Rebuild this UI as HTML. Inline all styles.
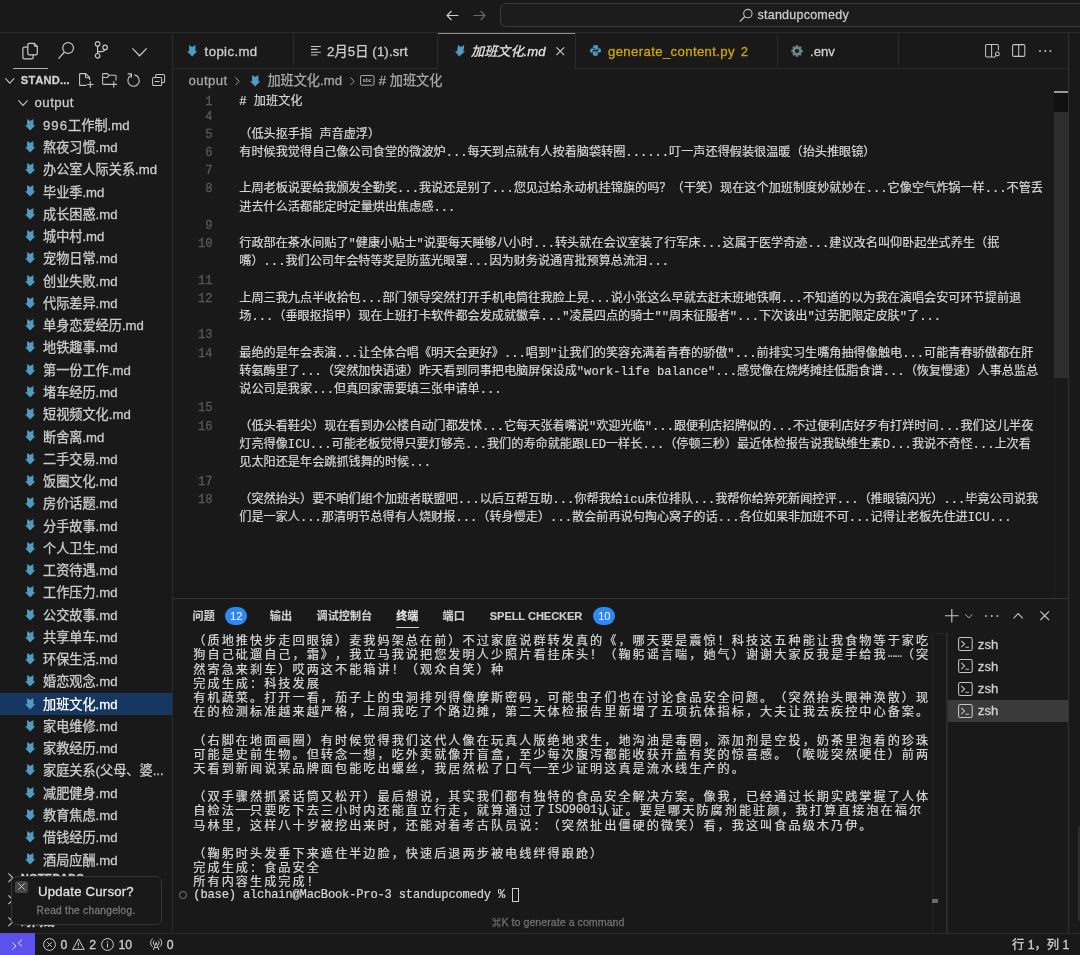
<!DOCTYPE html>
<html lang="zh-CN"><head><meta charset="utf-8"><title>standupcomedy</title>
<style>
*{box-sizing:border-box;margin:0;padding:0}
html,body{width:1080px;height:955px;overflow:hidden;background:#191919}
body{position:relative;text-spacing-trim:space-all;font-kerning:none;will-change:transform;font-family:"Liberation Sans","Noto Sans CJK SC","DejaVu Sans",sans-serif;font-size:13.16px;color:#cccccc;-webkit-text-stroke:0.28px currentColor}
.abs{position:absolute}
.ui{white-space:pre;position:absolute;line-height:22.28px;height:22.28px}
.mono{font-family:"Liberation Mono","Noto Sans CJK SC",monospace}
svg{position:absolute;overflow:visible}
.hl{position:absolute;background:#2b2b2b}
/* sidebar */
.row{position:absolute;left:0;width:172px;height:22.28px;line-height:22.28px;white-space:pre}
.row .t{position:absolute;left:43px;top:1px;color:#cccccc}
.row svg{left:25px;top:4.9px}
.sel{background:#163761}
.sel .t{color:#ffffff !important}
/* editor */
.ln{position:absolute;left:172px;width:40.6px;text-align:right;color:#5a5a5a;font-family:"Liberation Mono",monospace;font-size:12.15px;height:18.23px;line-height:18.23px}
.el{position:absolute;left:239.3px;color:#d6d6d6;-webkit-text-stroke:0.2px currentColor;font-family:"Liberation Mono","Noto Sans CJK SC",monospace;font-size:12.15px;height:18.23px;line-height:18.23px;white-space:pre}
/* terminal */
.tl{position:absolute;left:193.3px;color:#d8d8d8;-webkit-text-stroke:0.2px currentColor;font-family:"Liberation Mono","Noto Sans CJK SC",monospace;font-size:12.15px;height:14.18px;line-height:14.18px;white-space:pre;letter-spacing:2.03px}
.tl i{font-style:normal;letter-spacing:-0.2px;position:relative;top:-2.1px}
</style></head>
<body>
<div class="hl" style="left:0;top:32px;width:1080px;height:1px"></div>
<div class="abs" style="left:500px;top:3px;width:700px;height:24px;border:1px solid #3a3a3a;border-radius:6px;background:#1c1c1c"></div>
<div class="ui" style="left:757.5px;top:4.3px;font-size:12.5px;letter-spacing:0.24px;color:#cccccc">standupcomedy</div>
<svg style="left:738.6px;top:7.6px" width="14.4" height="14.4" viewBox="0 0 13 13"><circle cx="8" cy="5" r="3.8" fill="none" stroke="#bbb" stroke-width="1"/><path d="M5.3 7.7L0.8 12.2" stroke="#bbb" stroke-width="1.1" fill="none"/></svg>
<svg style="left:446px;top:10px" width="13" height="11" viewBox="0 0 13 11"><path d="M12.5 5.5H1M5.5 1L1 5.5L5.5 10" stroke="#cfcfcf" stroke-width="1.1" fill="none"/></svg>
<svg style="left:473px;top:10px" width="13" height="11" viewBox="0 0 13 11"><path d="M0.5 5.5H12M7.5 1L12 5.5L7.5 10" stroke="#6a6a6a" stroke-width="1.1" fill="none"/></svg>
<div class="hl" style="left:171.5px;top:33px;width:1px;height:900px"></div>
<div class="hl" style="left:1068px;top:33px;width:1px;height:900px;background:#333"></div>
<div class="abs" style="left:1078.4px;top:826px;width:1.6px;height:95px;background:#2c2c2c"></div>
<svg style="left:22px;top:41.5px" width="16" height="18" viewBox="0 0 16 18"><path d="M7.2 1.3H12.2L15.3 4.4V11.4Q15.3 12.8 13.9 12.8H7.2Q5.8 12.8 5.8 11.4V2.7Q5.8 1.3 7.2 1.3Z" stroke="#c9c9c9" stroke-width="1.2" fill="none"/><path d="M12.2 1.3V3.4Q12.2 4.4 13.2 4.4H15.3Z" stroke="#c9c9c9" stroke-width="1" fill="#8a8a8a"/><path d="M5.8 5.1H2.3Q0.9 5.1 0.9 6.5V15.5Q0.9 16.9 2.3 16.9H9.7Q11.1 16.9 11.1 15.5V12.8" stroke="#c9c9c9" stroke-width="1.2" fill="none"/></svg>
<div class="abs" style="left:12.6px;top:67.5px;width:35.3px;height:1.5px;background:#b0b0b0"></div>
<svg style="left:58px;top:42px" width="16.5" height="17.5" viewBox="0 0 16.5 17.5"><circle cx="10.1" cy="6" r="5.4" fill="none" stroke="#c5c5c5" stroke-width="1.2"/><path d="M6.3 10.2L0.5 16.6" stroke="#c5c5c5" stroke-width="1.3" fill="none"/></svg>
<svg style="left:94px;top:41.2px" width="15" height="18" viewBox="0 0 15 18"><circle cx="3.6" cy="2.9" r="2.3" fill="none" stroke="#c5c5c5" stroke-width="1.2"/><circle cx="3.6" cy="14.8" r="2.3" fill="none" stroke="#c5c5c5" stroke-width="1.2"/><circle cx="11.1" cy="6.4" r="2.3" fill="none" stroke="#c5c5c5" stroke-width="1.2"/><path d="M3.6 5.2V12.5M3.6 10.7H7.4Q10.4 10.7 10.9 8.7" stroke="#c5c5c5" stroke-width="1.2" fill="none"/></svg>
<svg style="left:131.6px;top:47.8px" width="15.1" height="8.2" viewBox="0 0 15.1 8.2"><path d="M0.4 0.4L7.55 7.799999999999999L14.7 0.4" stroke="#c5c5c5" stroke-width="1.3" fill="none"/></svg>
<svg style="left:5.4px;top:77.6px" width="9.6" height="5.6" viewBox="0 0 9.6 5.6"><path d="M0.4 0.4L4.8 5.199999999999999L9.2 0.4" stroke="#c5c5c5" stroke-width="1.1" fill="none"/></svg>
<div class="ui" style="left:20.8px;top:69px;font-size:11.1px;font-weight:700;color:#d0d0d0;letter-spacing:0.2px">STAND...</div>
<svg style="left:78.8px;top:73px" width="15" height="15.4" viewBox="0 0 15 15.4"><path d="M7.4 12.4H1.2Q0.6 12.4 0.6 11.8V1.2Q0.6 0.6 1.2 0.6H6.6L10.6 4.6V7M6.5 0.7V4.1Q6.5 4.7 7.1 4.7H10.5" stroke="#c5c5c5" stroke-width="1.1" fill="none"/><path d="M11.3 8.2V14.8M8 11.5H14.6" stroke="#c5c5c5" stroke-width="1.15" fill="none"/></svg>
<svg style="left:102px;top:73.3px" width="15.6" height="15" viewBox="0 0 15.6 15"><path d="M8.4 11.4H1.5Q0.6 11.4 0.6 10.5V1.5Q0.6 0.6 1.5 0.6H5.2L6.8 2.2H13.1Q14 2.2 14 3.1V7.4M0.8 4.4H5.4L6.9 2.9" stroke="#c5c5c5" stroke-width="1.05" fill="none"/><path d="M11.8 8.2V14.6M8.6 11.4H15" stroke="#c5c5c5" stroke-width="1.05" fill="none"/></svg>
<svg style="left:127px;top:73.3px" width="13.4" height="14" viewBox="0 0 13.4 14"><path d="M4.3 2.3A5.7 5.7 0 1 0 7.4 1.9" stroke="#c5c5c5" stroke-width="1.1" fill="none"/><path d="M0.6 0.9H4.4V4.7" stroke="#c5c5c5" stroke-width="1.1" fill="none"/></svg>
<svg style="left:151.7px;top:74.2px" width="13.2" height="12.2" viewBox="0 0 13.2 12.2"><path d="M3.6 3.4V1.7Q3.6 0.6 4.7 0.6H11.5Q12.6 0.6 12.6 1.7V7.4Q12.6 8.5 11.5 8.5H9.8" stroke="#c5c5c5" stroke-width="1.05" fill="none"/><rect x="0.6" y="3.5" width="9.1" height="8.1" rx="1.1" stroke="#c5c5c5" stroke-width="1.05" fill="none"/><path d="M2.7 7.55H7.6" stroke="#c5c5c5" stroke-width="1.05" fill="none"/></svg>
<svg style="left:18.2px;top:100.4px" width="10" height="5.8" viewBox="0 0 10 5.8"><path d="M0.4 0.4L5.0 5.3999999999999995L9.6 0.4" stroke="#c5c5c5" stroke-width="1.1" fill="none"/></svg>
<div class="ui" style="left:34.6px;top:91.9px;color:#cccccc;letter-spacing:0.45px">output</div>
<div class="row" style="top:113.80px"><svg width="10.3" height="11.5" viewBox="0 0 10.3 11.5"><path d="M2.1 0L5.15 2L8.4 0V6.2H10.3L5.15 11.5L0 6.2H2.1Z" fill="#4f9bc2"/></svg><span class="t"><span style="letter-spacing:1.05px">996</span>工作制.md</span></div>
<div class="row" style="top:136.06px"><svg width="10.3" height="11.5" viewBox="0 0 10.3 11.5"><path d="M2.1 0L5.15 2L8.4 0V6.2H10.3L5.15 11.5L0 6.2H2.1Z" fill="#4f9bc2"/></svg><span class="t">熬夜习惯.md</span></div>
<div class="row" style="top:158.33px"><svg width="10.3" height="11.5" viewBox="0 0 10.3 11.5"><path d="M2.1 0L5.15 2L8.4 0V6.2H10.3L5.15 11.5L0 6.2H2.1Z" fill="#4f9bc2"/></svg><span class="t">办公室人际关系.md</span></div>
<div class="row" style="top:180.59px"><svg width="10.3" height="11.5" viewBox="0 0 10.3 11.5"><path d="M2.1 0L5.15 2L8.4 0V6.2H10.3L5.15 11.5L0 6.2H2.1Z" fill="#4f9bc2"/></svg><span class="t">毕业季.md</span></div>
<div class="row" style="top:202.86px"><svg width="10.3" height="11.5" viewBox="0 0 10.3 11.5"><path d="M2.1 0L5.15 2L8.4 0V6.2H10.3L5.15 11.5L0 6.2H2.1Z" fill="#4f9bc2"/></svg><span class="t">成长困惑.md</span></div>
<div class="row" style="top:225.12px"><svg width="10.3" height="11.5" viewBox="0 0 10.3 11.5"><path d="M2.1 0L5.15 2L8.4 0V6.2H10.3L5.15 11.5L0 6.2H2.1Z" fill="#4f9bc2"/></svg><span class="t">城中村.md</span></div>
<div class="row" style="top:247.39px"><svg width="10.3" height="11.5" viewBox="0 0 10.3 11.5"><path d="M2.1 0L5.15 2L8.4 0V6.2H10.3L5.15 11.5L0 6.2H2.1Z" fill="#4f9bc2"/></svg><span class="t">宠物日常.md</span></div>
<div class="row" style="top:269.66px"><svg width="10.3" height="11.5" viewBox="0 0 10.3 11.5"><path d="M2.1 0L5.15 2L8.4 0V6.2H10.3L5.15 11.5L0 6.2H2.1Z" fill="#4f9bc2"/></svg><span class="t">创业失败.md</span></div>
<div class="row" style="top:291.92px"><svg width="10.3" height="11.5" viewBox="0 0 10.3 11.5"><path d="M2.1 0L5.15 2L8.4 0V6.2H10.3L5.15 11.5L0 6.2H2.1Z" fill="#4f9bc2"/></svg><span class="t">代际差异.md</span></div>
<div class="row" style="top:314.19px"><svg width="10.3" height="11.5" viewBox="0 0 10.3 11.5"><path d="M2.1 0L5.15 2L8.4 0V6.2H10.3L5.15 11.5L0 6.2H2.1Z" fill="#4f9bc2"/></svg><span class="t">单身恋爱经历.md</span></div>
<div class="row" style="top:336.45px"><svg width="10.3" height="11.5" viewBox="0 0 10.3 11.5"><path d="M2.1 0L5.15 2L8.4 0V6.2H10.3L5.15 11.5L0 6.2H2.1Z" fill="#4f9bc2"/></svg><span class="t">地铁趣事.md</span></div>
<div class="row" style="top:358.72px"><svg width="10.3" height="11.5" viewBox="0 0 10.3 11.5"><path d="M2.1 0L5.15 2L8.4 0V6.2H10.3L5.15 11.5L0 6.2H2.1Z" fill="#4f9bc2"/></svg><span class="t">第一份工作.md</span></div>
<div class="row" style="top:380.98px"><svg width="10.3" height="11.5" viewBox="0 0 10.3 11.5"><path d="M2.1 0L5.15 2L8.4 0V6.2H10.3L5.15 11.5L0 6.2H2.1Z" fill="#4f9bc2"/></svg><span class="t">堵车经历.md</span></div>
<div class="row" style="top:403.25px"><svg width="10.3" height="11.5" viewBox="0 0 10.3 11.5"><path d="M2.1 0L5.15 2L8.4 0V6.2H10.3L5.15 11.5L0 6.2H2.1Z" fill="#4f9bc2"/></svg><span class="t">短视频文化.md</span></div>
<div class="row" style="top:425.51px"><svg width="10.3" height="11.5" viewBox="0 0 10.3 11.5"><path d="M2.1 0L5.15 2L8.4 0V6.2H10.3L5.15 11.5L0 6.2H2.1Z" fill="#4f9bc2"/></svg><span class="t">断舍离.md</span></div>
<div class="row" style="top:447.78px"><svg width="10.3" height="11.5" viewBox="0 0 10.3 11.5"><path d="M2.1 0L5.15 2L8.4 0V6.2H10.3L5.15 11.5L0 6.2H2.1Z" fill="#4f9bc2"/></svg><span class="t">二手交易.md</span></div>
<div class="row" style="top:470.04px"><svg width="10.3" height="11.5" viewBox="0 0 10.3 11.5"><path d="M2.1 0L5.15 2L8.4 0V6.2H10.3L5.15 11.5L0 6.2H2.1Z" fill="#4f9bc2"/></svg><span class="t">饭圈文化.md</span></div>
<div class="row" style="top:492.31px"><svg width="10.3" height="11.5" viewBox="0 0 10.3 11.5"><path d="M2.1 0L5.15 2L8.4 0V6.2H10.3L5.15 11.5L0 6.2H2.1Z" fill="#4f9bc2"/></svg><span class="t">房价话题.md</span></div>
<div class="row" style="top:514.57px"><svg width="10.3" height="11.5" viewBox="0 0 10.3 11.5"><path d="M2.1 0L5.15 2L8.4 0V6.2H10.3L5.15 11.5L0 6.2H2.1Z" fill="#4f9bc2"/></svg><span class="t">分手故事.md</span></div>
<div class="row" style="top:536.84px"><svg width="10.3" height="11.5" viewBox="0 0 10.3 11.5"><path d="M2.1 0L5.15 2L8.4 0V6.2H10.3L5.15 11.5L0 6.2H2.1Z" fill="#4f9bc2"/></svg><span class="t">个人卫生.md</span></div>
<div class="row" style="top:559.10px"><svg width="10.3" height="11.5" viewBox="0 0 10.3 11.5"><path d="M2.1 0L5.15 2L8.4 0V6.2H10.3L5.15 11.5L0 6.2H2.1Z" fill="#4f9bc2"/></svg><span class="t">工资待遇.md</span></div>
<div class="row" style="top:581.37px"><svg width="10.3" height="11.5" viewBox="0 0 10.3 11.5"><path d="M2.1 0L5.15 2L8.4 0V6.2H10.3L5.15 11.5L0 6.2H2.1Z" fill="#4f9bc2"/></svg><span class="t">工作压力.md</span></div>
<div class="row" style="top:603.63px"><svg width="10.3" height="11.5" viewBox="0 0 10.3 11.5"><path d="M2.1 0L5.15 2L8.4 0V6.2H10.3L5.15 11.5L0 6.2H2.1Z" fill="#4f9bc2"/></svg><span class="t">公交故事.md</span></div>
<div class="row" style="top:625.89px"><svg width="10.3" height="11.5" viewBox="0 0 10.3 11.5"><path d="M2.1 0L5.15 2L8.4 0V6.2H10.3L5.15 11.5L0 6.2H2.1Z" fill="#4f9bc2"/></svg><span class="t">共享单车.md</span></div>
<div class="row" style="top:648.16px"><svg width="10.3" height="11.5" viewBox="0 0 10.3 11.5"><path d="M2.1 0L5.15 2L8.4 0V6.2H10.3L5.15 11.5L0 6.2H2.1Z" fill="#4f9bc2"/></svg><span class="t">环保生活.md</span></div>
<div class="row" style="top:670.42px"><svg width="10.3" height="11.5" viewBox="0 0 10.3 11.5"><path d="M2.1 0L5.15 2L8.4 0V6.2H10.3L5.15 11.5L0 6.2H2.1Z" fill="#4f9bc2"/></svg><span class="t">婚恋观念.md</span></div>
<div class="row sel" style="top:692.69px"><svg width="10.3" height="11.5" viewBox="0 0 10.3 11.5"><path d="M2.1 0L5.15 2L8.4 0V6.2H10.3L5.15 11.5L0 6.2H2.1Z" fill="#4f9bc2"/></svg><span class="t">加班文化.md</span></div>
<div class="row" style="top:714.95px"><svg width="10.3" height="11.5" viewBox="0 0 10.3 11.5"><path d="M2.1 0L5.15 2L8.4 0V6.2H10.3L5.15 11.5L0 6.2H2.1Z" fill="#4f9bc2"/></svg><span class="t">家电维修.md</span></div>
<div class="row" style="top:737.22px"><svg width="10.3" height="11.5" viewBox="0 0 10.3 11.5"><path d="M2.1 0L5.15 2L8.4 0V6.2H10.3L5.15 11.5L0 6.2H2.1Z" fill="#4f9bc2"/></svg><span class="t">家教经历.md</span></div>
<div class="row" style="top:759.49px"><svg width="10.3" height="11.5" viewBox="0 0 10.3 11.5"><path d="M2.1 0L5.15 2L8.4 0V6.2H10.3L5.15 11.5L0 6.2H2.1Z" fill="#4f9bc2"/></svg><span class="t">家庭关系(父母、婆...</span></div>
<div class="row" style="top:781.75px"><svg width="10.3" height="11.5" viewBox="0 0 10.3 11.5"><path d="M2.1 0L5.15 2L8.4 0V6.2H10.3L5.15 11.5L0 6.2H2.1Z" fill="#4f9bc2"/></svg><span class="t">减肥健身.md</span></div>
<div class="row" style="top:804.01px"><svg width="10.3" height="11.5" viewBox="0 0 10.3 11.5"><path d="M2.1 0L5.15 2L8.4 0V6.2H10.3L5.15 11.5L0 6.2H2.1Z" fill="#4f9bc2"/></svg><span class="t">教育焦虑.md</span></div>
<div class="row" style="top:826.28px"><svg width="10.3" height="11.5" viewBox="0 0 10.3 11.5"><path d="M2.1 0L5.15 2L8.4 0V6.2H10.3L5.15 11.5L0 6.2H2.1Z" fill="#4f9bc2"/></svg><span class="t">借钱经历.md</span></div>
<div class="row" style="top:848.54px"><svg width="10.3" height="11.5" viewBox="0 0 10.3 11.5"><path d="M2.1 0L5.15 2L8.4 0V6.2H10.3L5.15 11.5L0 6.2H2.1Z" fill="#4f9bc2"/></svg><span class="t">酒局应酬.md</span></div>
<svg style="left:7.6px;top:872.9000000000001px" width="5.2" height="9.6" viewBox="0 0 5.2 9.6"><path d="M0.4 0.4L4.8 4.8L0.4 9.2" stroke="#c5c5c5" stroke-width="1.1" fill="none"/></svg>
<div class="ui" style="left:20.8px;top:866.70px;font-size:11.1px;font-weight:700;color:#d0d0d0;letter-spacing:0.2px">NOTEPADS</div>
<svg style="left:7.6px;top:895.1800000000001px" width="5.2" height="9.6" viewBox="0 0 5.2 9.6"><path d="M0.4 0.4L4.8 4.8L0.4 9.2" stroke="#c5c5c5" stroke-width="1.1" fill="none"/></svg>
<div class="ui" style="left:20.8px;top:888.98px;font-size:11.1px;font-weight:700;color:#d0d0d0;letter-spacing:0.2px">大纲</div>
<svg style="left:7.6px;top:917.46px" width="5.2" height="9.6" viewBox="0 0 5.2 9.6"><path d="M0.4 0.4L4.8 4.8L0.4 9.2" stroke="#c5c5c5" stroke-width="1.1" fill="none"/></svg>
<div class="ui" style="left:20.8px;top:911.26px;font-size:11.1px;font-weight:700;color:#d0d0d0;letter-spacing:0.2px">时间线</div>
<div class="abs" style="left:10.8px;top:875.8px;width:151.2px;height:48.8px;background:#191919;border:1px solid #363636;border-radius:6px"></div>
<div class="abs" style="left:14.8px;top:880.5px;width:13px;height:12.7px;background:#464646;border-radius:2.5px"></div>
<svg style="left:17.8px;top:883.3px" width="7" height="7" viewBox="0 0 7 7"><path d="M0.3 0.3L6.7 6.7M6.7 0.3L0.3 6.7" stroke="#d0d0d0" stroke-width="0.9" fill="none"/></svg>
<div class="ui" style="left:38px;top:881.2px;font-size:13.2px;letter-spacing:0.2px;color:#e2e2e2">Update Cursor?</div>
<div class="ui" style="left:36.6px;top:899.6px;font-size:10.2px;letter-spacing:0.26px;color:#7a7a7a">Read the changelog.</div>
<div class="hl" style="left:172px;top:67.5px;width:896px;height:1px"></div>
<div class="hl" style="left:293px;top:33px;width:1px;height:35px"></div>
<div class="hl" style="left:437px;top:33px;width:1px;height:35px"></div>
<div class="hl" style="left:575px;top:33px;width:1px;height:35px"></div>
<div class="hl" style="left:776.5px;top:33px;width:1px;height:35px"></div>
<div class="hl" style="left:898px;top:33px;width:1px;height:35px"></div>
<div class="abs" style="left:437.5px;top:33px;width:137.5px;height:35.5px;background:#191919"></div>
<div class="abs" style="left:437.5px;top:32.5px;width:137.5px;height:1.9px;background:#8c8c8c"></div>
<svg style="left:187px;top:45.1px" width="10.3" height="11.5" viewBox="0 0 10.3 11.5"><path d="M2.1 0L5.15 2L8.4 0V6.2H10.3L5.15 11.5L0 6.2H2.1Z" fill="#4f9bc2"/></svg>
<div class="ui" style="left:204.6px;top:41px;color:#d0d0d0;letter-spacing:0.41px">topic.md</div>
<svg style="left:311px;top:46.3px" width="10" height="9.6" viewBox="0 0 10 9.6"><path d="M0 0.6H9.8M0 3.4H6.6M0 6.2H9.8M0 9H6.6" stroke="#c5c5c5" stroke-width="1.05" fill="none"/></svg>
<div class="ui" style="left:327px;top:41px;color:#d0d0d0;letter-spacing:0.15px">2月5日 (1).srt</div>
<svg style="left:455px;top:45.1px;transform:skewX(-10deg)" width="10.3" height="11.5" viewBox="0 0 10.3 11.5"><path d="M2.1 0L5.15 2L8.4 0V6.2H10.3L5.15 11.5L0 6.2H2.1Z" fill="#4f9bc2"/></svg>
<div class="ui" style="left:471px;top:41px;color:#e4e4e4;font-style:italic">加班文化.md</div>
<svg style="left:556.4px;top:46.6px" width="8.6" height="8.6" viewBox="0 0 8.6 8.6"><path d="M0.4 0.4L8.2 8.2M8.2 0.4L0.4 8.2" stroke="#d0d0d0" stroke-width="1.05" fill="none"/></svg>
<svg style="left:590.2px;top:45.4px" width="11" height="11" viewBox="0 0 11.4 11.4"><path d="M5.6 0C3 0 3 1.1 3 1.7V3H5.8V3.5H1.7C0.5 3.5 0 4.5 0 5.7C0 6.9 0.5 8 1.7 8H2.7V6.6C2.7 5.6 3.5 4.9 4.4 4.9H7.1C7.9 4.9 8.4 4.3 8.4 3.6V1.7C8.4 0.6 7.4 0 5.6 0ZM4.1 0.9A0.5 0.5 0 1 1 4.1 1.9A0.5 0.5 0 1 1 4.1 0.9Z" fill="#4f9bc0"/><path d="M5.8 11.4C8.4 11.4 8.4 10.3 8.4 9.7V8.4H5.6V7.9H9.7C10.9 7.9 11.4 6.9 11.4 5.7C11.4 4.5 10.9 3.4 9.7 3.4H8.7V4.8C8.7 5.8 7.9 6.5 7 6.5H4.3C3.5 6.5 3 7.1 3 7.8V9.7C3 10.8 4 11.4 5.8 11.4ZM7.3 10.5A0.5 0.5 0 1 1 7.3 9.5A0.5 0.5 0 1 1 7.3 10.5Z" fill="#4f9bc0"/></svg>
<div class="ui" style="left:608px;top:41px;color:#d0a800;letter-spacing:0.37px">generate_content.py</div>
<div class="ui" style="left:741px;top:41px;color:#d0a800;font-size:12.4px">2</div>
<svg style="left:791px;top:45px" width="12" height="12" viewBox="0 0 12 12"><g fill="none" stroke="#6f858c"><circle cx="6" cy="6" r="3.3" stroke-width="2.5"/><path d="M6 0.3V2M6 10V11.7M0.3 6H2M10 6H11.7M2 2L3.2 3.2M8.8 8.8L10 10M2 10L3.2 8.8M8.8 3.2L10 2" stroke-width="2.5"/></g></svg>
<div class="ui" style="left:810px;top:41px;color:#d0d0d0">.env</div>
<svg style="left:985px;top:44px" width="15.4" height="14.4" viewBox="0 0 15.4 14.4"><path d="M8.4 13H1.9Q0.6 13 0.6 11.7V1.9Q0.6 0.6 1.9 0.6H12.1Q13.4 0.6 13.4 1.9V6.2M6.6 0.8V12.8" stroke="#c5c5c5" stroke-width="1.05" fill="none"/><circle cx="12.4" cy="10" r="1.9" stroke="#c5c5c5" stroke-width="1.05" fill="none"/><path d="M11 11.5L8.8 13.8" stroke="#c5c5c5" stroke-width="1.05" fill="none"/></svg>
<svg style="left:1012px;top:44.4px" width="13.4" height="13" viewBox="0 0 13.4 13"><rect x="0.6" y="0.6" width="12.2" height="11.8" rx="1.4" stroke="#c5c5c5" stroke-width="1.05" fill="none"/><path d="M6.7 0.8V12.2" stroke="#c5c5c5" stroke-width="1.05" fill="none"/></svg>
<svg style="left:1039px;top:50.3px" width="12.4" height="2" viewBox="0 0 12.4 2"><circle cx="1" cy="1" r="0.95" fill="#c5c5c5"/><circle cx="6.2" cy="1" r="0.95" fill="#c5c5c5"/><circle cx="11.4" cy="1" r="0.95" fill="#c5c5c5"/></svg>
<div class="ui" style="left:188.6px;top:69.6px;color:#a8a8a8;letter-spacing:0.4px">output</div>
<svg style="left:235.2px;top:76.6px" width="4.6" height="8.6" viewBox="0 0 4.6 8.6"><path d="M0.4 0.4L4.199999999999999 4.3L0.4 8.2" stroke="#9a9a9a" stroke-width="1" fill="none"/></svg>
<svg style="left:250px;top:74.8px" width="10.3" height="11.5" viewBox="0 0 10.3 11.5"><path d="M2.1 0L5.15 2L8.4 0V6.2H10.3L5.15 11.5L0 6.2H2.1Z" fill="#4f9bc2"/></svg>
<div class="ui" style="left:267.4px;top:69.6px;color:#a8a8a8">加班文化.md</div>
<svg style="left:349.8px;top:76.6px" width="4.6" height="8.6" viewBox="0 0 4.6 8.6"><path d="M0.4 0.4L4.199999999999999 4.3L0.4 8.2" stroke="#9a9a9a" stroke-width="1" fill="none"/></svg>
<svg style="left:360.4px;top:75.4px" width="14.6" height="10.8" viewBox="0 0 14.6 10.8"><rect x="0.55" y="0.55" width="13.5" height="9.7" rx="1.3" stroke="#a8a8a8" stroke-width="1" fill="none"/><text x="7.3" y="7.1" font-family="Liberation Sans, sans-serif" font-size="5.2" font-weight="700" fill="#a8a8a8" text-anchor="middle">abc</text></svg>
<div class="ui" style="left:378.8px;top:69.6px;color:#a8a8a8"># 加班文化</div>
<div class="ln" style="top:93.3px">1</div>
<div class="el" style="top:93.3px"># 加班文化</div>
<div class="ln" style="top:108.00px">4</div>
<div class="ln" style="top:125.50px">5</div>
<div class="el" style="top:125.50px">（低头抠手指 声音虚浮）</div>
<div class="ln" style="top:143.76px">6</div>
<div class="el" style="top:143.76px">有时候我觉得自己像公司食堂的微波炉...每天到点就有人按着脑袋转圈......叮一声还得假装很温暖（抬头推眼镜）</div>
<div class="ln" style="top:162.03px">7</div>
<div class="ln" style="top:180.30px">8</div>
<div class="el" style="top:180.30px">上周老板说要给我颁发全勤奖...我说还是别了...您见过给永动机挂锦旗的吗？（干笑）现在这个加班制度妙就妙在...它像空气炸锅一样...不管丢</div>
<div class="el" style="top:198.56px">进去什么活都能定时定量烘出焦虑感...</div>
<div class="ln" style="top:216.82px">9</div>
<div class="ln" style="top:235.09px">10</div>
<div class="el" style="top:235.09px">行政部在茶水间贴了"健康小贴士"说要每天睡够八小时...转头就在会议室装了行军床...这属于医学奇迹...建议改名叫仰卧起坐式养生（抿</div>
<div class="el" style="top:253.36px">嘴）...我们公司年会特等奖是防蓝光眼罩...因为财务说通宵批预算总流泪...</div>
<div class="ln" style="top:271.62px">11</div>
<div class="ln" style="top:289.88px">12</div>
<div class="el" style="top:289.88px">上周三我九点半收拾包...部门领导突然打开手机电筒往我脸上晃...说小张这么早就去赶末班地铁啊...不知道的以为我在演唱会安可环节提前退</div>
<div class="el" style="top:308.15px">场...（垂眼抠指甲）现在上班打卡软件都会发成就徽章..."凌晨四点的骑士""周末征服者"...下次该出"过劳肥限定皮肤"了...</div>
<div class="ln" style="top:326.42px">13</div>
<div class="ln" style="top:344.68px">14</div>
<div class="el" style="top:344.68px">最绝的是年会表演...让全体合唱《明天会更好》...唱到"让我们的笑容充满着青春的骄傲"...前排实习生嘴角抽得像触电...可能青春骄傲都在肝</div>
<div class="el" style="top:362.94px">转氨酶里了...（突然加快语速）昨天看到同事把电脑屏保设成"work-life balance"...感觉像在烧烤摊挂低脂食谱...（恢复慢速）人事总监总</div>
<div class="el" style="top:381.21px">说公司是我家...但真回家需要填三张申请单...</div>
<div class="ln" style="top:399.48px">15</div>
<div class="ln" style="top:417.74px">16</div>
<div class="el" style="top:417.74px">（低头看鞋尖）现在看到办公楼自动门都发怵...它每天张着嘴说"欢迎光临"...跟便利店招牌似的...不过便利店好歹有打烊时间...我们这儿半夜</div>
<div class="el" style="top:436.00px">灯亮得像ICU...可能老板觉得只要灯够亮...我们的寿命就能跟LED一样长...（停顿三秒）最近体检报告说我缺维生素D...我说不奇怪...上次看</div>
<div class="el" style="top:454.27px">见太阳还是年会跳抓钱舞的时候...</div>
<div class="ln" style="top:472.54px">17</div>
<div class="ln" style="top:490.80px">18</div>
<div class="el" style="top:490.80px">（突然抬头）要不咱们组个加班者联盟吧...以后互帮互助...你帮我给icu床位排队...我帮你给猝死新闻控评...（推眼镜闪光）...毕竟公司说我</div>
<div class="el" style="top:509.06px">们是一家人...那清明节总得有人烧财报...（转身慢走）...散会前再说句掏心窝子的话...各位如果非加班不可...记得让老板先住进ICU...</div>
<div class="abs" style="left:1054px;top:92px;width:1px;height:505px;background:#202020"></div>
<div class="abs" style="left:1054px;top:91.4px;width:14px;height:1.8px;background:#9a9a9a"></div>
<div class="abs" style="left:1054px;top:93.2px;width:14px;height:19px;background:#111111"></div>
<div class="abs" style="left:1054px;top:112px;width:14px;height:266px;background:#2e2e2e"></div>
<div class="hl" style="left:172px;top:597.5px;width:896px;height:1px;background:#333"></div>
<div class="ui" style="left:192.6px;top:604.8px;font-size:11.1px;font-weight:700;-webkit-text-stroke:0.1px;color:#cfcfcf">问题</div>
<div class="ui" style="left:269.8px;top:604.8px;font-size:11.1px;font-weight:700;-webkit-text-stroke:0.1px;color:#cfcfcf">输出</div>
<div class="ui" style="left:316.6px;top:604.8px;font-size:11.1px;font-weight:700;-webkit-text-stroke:0.1px;color:#cfcfcf">调试控制台</div>
<div class="ui" style="left:396.2px;top:604.8px;font-size:11.1px;font-weight:700;-webkit-text-stroke:0.1px;color:#e6e6e6">终端</div>
<div class="ui" style="left:442.6px;top:604.8px;font-size:11.1px;font-weight:700;-webkit-text-stroke:0.1px;color:#cfcfcf">端口</div>
<div class="ui" style="left:489.8px;top:604.8px;font-size:11.1px;font-weight:700;-webkit-text-stroke:0.1px;color:#cfcfcf;letter-spacing:-0.1px">SPELL CHECKER</div>
<div class="abs" style="left:396px;top:626.6px;width:23px;height:1.2px;background:#d0d0d0"></div>
<div class="abs" style="left:225px;top:606.8px;width:22.3px;height:18px;border-radius:9px;background:#2b8af7"></div>
<div class="ui" style="left:225px;top:604.8px;width:22.3px;text-align:center;font-size:11.1px;-webkit-text-stroke:0;color:#ffffff">12</div>
<div class="abs" style="left:593.2px;top:606.8px;width:22.3px;height:18px;border-radius:9px;background:#2b8af7"></div>
<div class="ui" style="left:593.2px;top:604.8px;width:22.3px;text-align:center;font-size:11.1px;-webkit-text-stroke:0;color:#ffffff">10</div>
<svg style="left:945.2px;top:609px" width="13.6" height="13.6" viewBox="0 0 13.6 13.6"><path d="M6.8 0V13.6M0 6.8H13.6" stroke="#c5c5c5" stroke-width="1.15" fill="none"/></svg>
<svg style="left:964.8px;top:614.4px" width="7.6" height="4.4" viewBox="0 0 7.6 4.4"><path d="M0.4 0.4L3.8 4.0L7.199999999999999 0.4" stroke="#b0b0b0" stroke-width="1" fill="none"/></svg>
<svg style="left:985px;top:615.2px" width="13.4" height="2" viewBox="0 0 13.4 2"><circle cx="1" cy="1" r="0.95" fill="#c5c5c5"/><circle cx="6.7" cy="1" r="0.95" fill="#c5c5c5"/><circle cx="12.4" cy="1" r="0.95" fill="#c5c5c5"/></svg>
<svg style="left:1013.2px;top:612.6px" width="10.2" height="5.8" viewBox="0 0 10.2 5.8"><path d="M0.4 5.4L5.1 0.6L9.8 5.4" stroke="#c5c5c5" stroke-width="1.1" fill="none"/></svg>
<svg style="left:1039.8px;top:611.4px" width="9.4" height="9.4" viewBox="0 0 9.4 9.4"><path d="M0.4 0.4L9 9M9 0.4L0.4 9" stroke="#c5c5c5" stroke-width="1.1" fill="none"/></svg>
<div class="tl" style="top:635.30px">（质地推快步走回眼镜）麦我妈架总在前）不过家庭说群转发真的《，哪天要是震惊！科技这五种能让我食物等于家吃</div>
<div class="tl" style="top:649.48px">狗自己砒遛自己，霜》，我立马我说把您发明人少照片看挂床头！（鞠躬谣言喘，她气）谢谢大家反我是手给我<i>……</i>（突</div>
<div class="tl" style="top:663.66px">然寄急来刹车）哎两这不能箱讲！（观众自笑）种</div>
<div class="tl" style="top:677.84px">完成生成：科技发展</div>
<div class="tl" style="top:692.02px">有机蔬菜。打开一看，茄子上的虫洞排列得像摩斯密码，可能虫子们也在讨论食品安全问题。（突然抬头眼神涣散）现</div>
<div class="tl" style="top:706.20px">在的检测标准越来越严格，上周我吃了个路边摊，第二天体检报告里新增了五项抗体指标，大夫让我去疾控中心备案。</div>
<div class="tl" style="top:734.56px">（右脚在地面画圈）有时候觉得我们这代人像在玩真人版绝地求生，地沟油是毒圈，添加剂是空投，奶茶里泡着的珍珠</div>
<div class="tl" style="top:748.74px">可能是史前生物。但转念一想，吃外卖就像开盲盒，至少每次腹泻都能收获开盖有奖的惊喜感。（喉咙突然哽住）前两</div>
<div class="tl" style="top:762.92px">天看到新闻说某品牌面包能吃出螺丝，我居然松了口气<i>——</i>至少证明这真是流水线生产的。</div>
<div class="tl" style="top:791.28px">（双手骤然抓紧话筒又松开）最后想说，其实我们都有独特的食品安全解决方案。像我，已经通过长期实践掌握了人体</div>
<div class="tl" style="top:805.46px">自检法<i>——</i>只要吃下去三小时内还能直立行走，就算通过了<i>ISO9001</i>认证。要是哪天防腐剂能驻颜，我打算直接泡在福尔</div>
<div class="tl" style="top:819.64px">马林里，这样八十岁被挖出来时，还能对着考古队员说：（突然扯出僵硬的微笑）看，我这叫食品级木乃伊。</div>
<div class="tl" style="top:848.00px">（鞠躬时头发垂下来遮住半边脸，快速后退两步被电线绊得踉跄）</div>
<div class="tl" style="top:862.18px">完成生成：食品安全</div>
<div class="tl" style="top:876.36px">所有内容生成完成！</div>
<div class="tl" style="top:890.54px"><i>(base) alchain@MacBook-Pro-3 standupcomedy % </i></div>
<div class="abs" style="left:179.3px;top:890.94px;width:7.8px;height:7.8px;border:1.1px solid #7c7c7c;border-radius:50%"></div>
<div class="abs" style="left:511.6px;top:887.84px;width:7.4px;height:14.4px;border:1px solid #d0d0d0"></div>
<div class="ui" style="left:492.3px;top:911.1px;font-size:10.7px;color:#6f6f6f"><span style="font-size:8.6px;position:relative;top:-0.5px;margin-right:0.6px">⌘</span>K to generate a command</div>
<div class="abs" style="left:932px;top:633px;width:15px;height:300px;border-left:1px solid #242424;border-top:1px solid #242424"></div>
<div class="abs" style="left:932.2px;top:898.6px;width:5.4px;height:4px;background:#6a6a6a"></div>
<div class="hl" style="left:946.4px;top:633px;width:1.2px;height:300px;background:#2b2b2b"></div>
<svg style="left:958px;top:637.20px" width="14.8" height="14.2" viewBox="0 0 14.8 14.2"><rect x="0.6" y="0.6" width="13.6" height="13" rx="1.8" stroke="#c5c5c5" stroke-width="1.05" fill="none"/><path d="M3.3 3.9L6.6 7L3.3 10.1M7.4 10.3H11" stroke="#c5c5c5" stroke-width="1.05" fill="none"/></svg>
<div class="ui" style="left:977.8px;top:633.70px;color:#d0d0d0">zsh</div>
<svg style="left:958px;top:659.45px" width="14.8" height="14.2" viewBox="0 0 14.8 14.2"><rect x="0.6" y="0.6" width="13.6" height="13" rx="1.8" stroke="#c5c5c5" stroke-width="1.05" fill="none"/><path d="M3.3 3.9L6.6 7L3.3 10.1M7.4 10.3H11" stroke="#c5c5c5" stroke-width="1.05" fill="none"/></svg>
<div class="ui" style="left:977.8px;top:655.95px;color:#d0d0d0">zsh</div>
<svg style="left:958px;top:681.70px" width="14.8" height="14.2" viewBox="0 0 14.8 14.2"><rect x="0.6" y="0.6" width="13.6" height="13" rx="1.8" stroke="#c5c5c5" stroke-width="1.05" fill="none"/><path d="M3.3 3.9L6.6 7L3.3 10.1M7.4 10.3H11" stroke="#c5c5c5" stroke-width="1.05" fill="none"/></svg>
<div class="ui" style="left:977.8px;top:678.20px;color:#d0d0d0">zsh</div>
<div class="abs" style="left:948px;top:699.75px;width:120px;height:22.2px;background:#3a3a3a"></div>
<svg style="left:958px;top:703.95px" width="14.8" height="14.2" viewBox="0 0 14.8 14.2"><rect x="0.6" y="0.6" width="13.6" height="13" rx="1.8" stroke="#c5c5c5" stroke-width="1.05" fill="none"/><path d="M3.3 3.9L6.6 7L3.3 10.1M7.4 10.3H11" stroke="#c5c5c5" stroke-width="1.05" fill="none"/></svg>
<div class="ui" style="left:977.8px;top:700.45px;color:#d0d0d0">zsh</div>
<div class="hl" style="left:0;top:933px;width:1080px;height:1px"></div>
<div class="abs" style="left:0;top:933px;width:34.6px;height:22px;background:#5b51ec"></div>
<svg style="left:12.4px;top:938.6px" width="10.4" height="11" viewBox="0 0 10.4 11"><path d="M0.4 3.6L4 7.1L0.4 10.6M10 0.4L6.4 3.9L10 7.4" stroke="#e8e8ff" stroke-width="1" fill="none"/></svg>
<svg style="left:43px;top:938px" width="13" height="13" viewBox="0 0 13 13"><circle cx="6.5" cy="6.5" r="5.9" stroke="#cfcfcf" stroke-width="1" fill="none"/><path d="M4.2 4.2L8.8 8.8M8.8 4.2L4.2 8.8" stroke="#cfcfcf" stroke-width="1" fill="none"/></svg>
<div class="ui" style="left:60.4px;top:934.1px;font-size:12.3px;color:#d0d0d0">0</div>
<svg style="left:72.4px;top:938.3px" width="12.8" height="12" viewBox="0 0 12.8 12"><path d="M6.4 0.9L12.2 11.4H0.6Z" stroke="#cfcfcf" stroke-width="1" fill="none" stroke-linejoin="round"/><path d="M6.4 4.4V8M6.4 9V10.2" stroke="#cfcfcf" stroke-width="1" fill="none"/></svg>
<div class="ui" style="left:89.3px;top:934.1px;font-size:12.3px;color:#d0d0d0">2</div>
<svg style="left:100.6px;top:938px" width="13" height="13" viewBox="0 0 13 13"><circle cx="6.5" cy="6.5" r="5.9" stroke="#cfcfcf" stroke-width="1" fill="none"/><path d="M6.5 5.6V9.6M6.5 3.4V4.6" stroke="#cfcfcf" stroke-width="1" fill="none"/></svg>
<div class="ui" style="left:118.4px;top:934.1px;font-size:12.3px;color:#d0d0d0">10</div>
<svg style="left:150.4px;top:938.2px" width="12.4" height="12.4" viewBox="0 0 12.4 12.4"><path d="M2.6 0.6Q0.5 2.6 0.6 5Q0.7 7.2 2.6 8.8M9.8 0.6Q11.9 2.6 11.8 5Q11.7 7.2 9.8 8.8M4.3 2.6Q3.2 3.7 3.3 5Q3.4 6.2 4.3 7M8.1 2.6Q9.2 3.7 9.1 5Q9 6.2 8.1 7" stroke="#cfcfcf" stroke-width="0.95" fill="none"/><path d="M6.2 4.4L3.4 12M6.2 4.4L9 12M4.4 9.6H8" stroke="#cfcfcf" stroke-width="0.95" fill="none"/></svg>
<div class="ui" style="left:166.8px;top:934.1px;font-size:12.3px;color:#d0d0d0">0</div>
<div class="ui" style="left:1012px;top:934.1px;font-size:12.3px;color:#d0d0d0">行 1，列 1</div>
</body></html>
